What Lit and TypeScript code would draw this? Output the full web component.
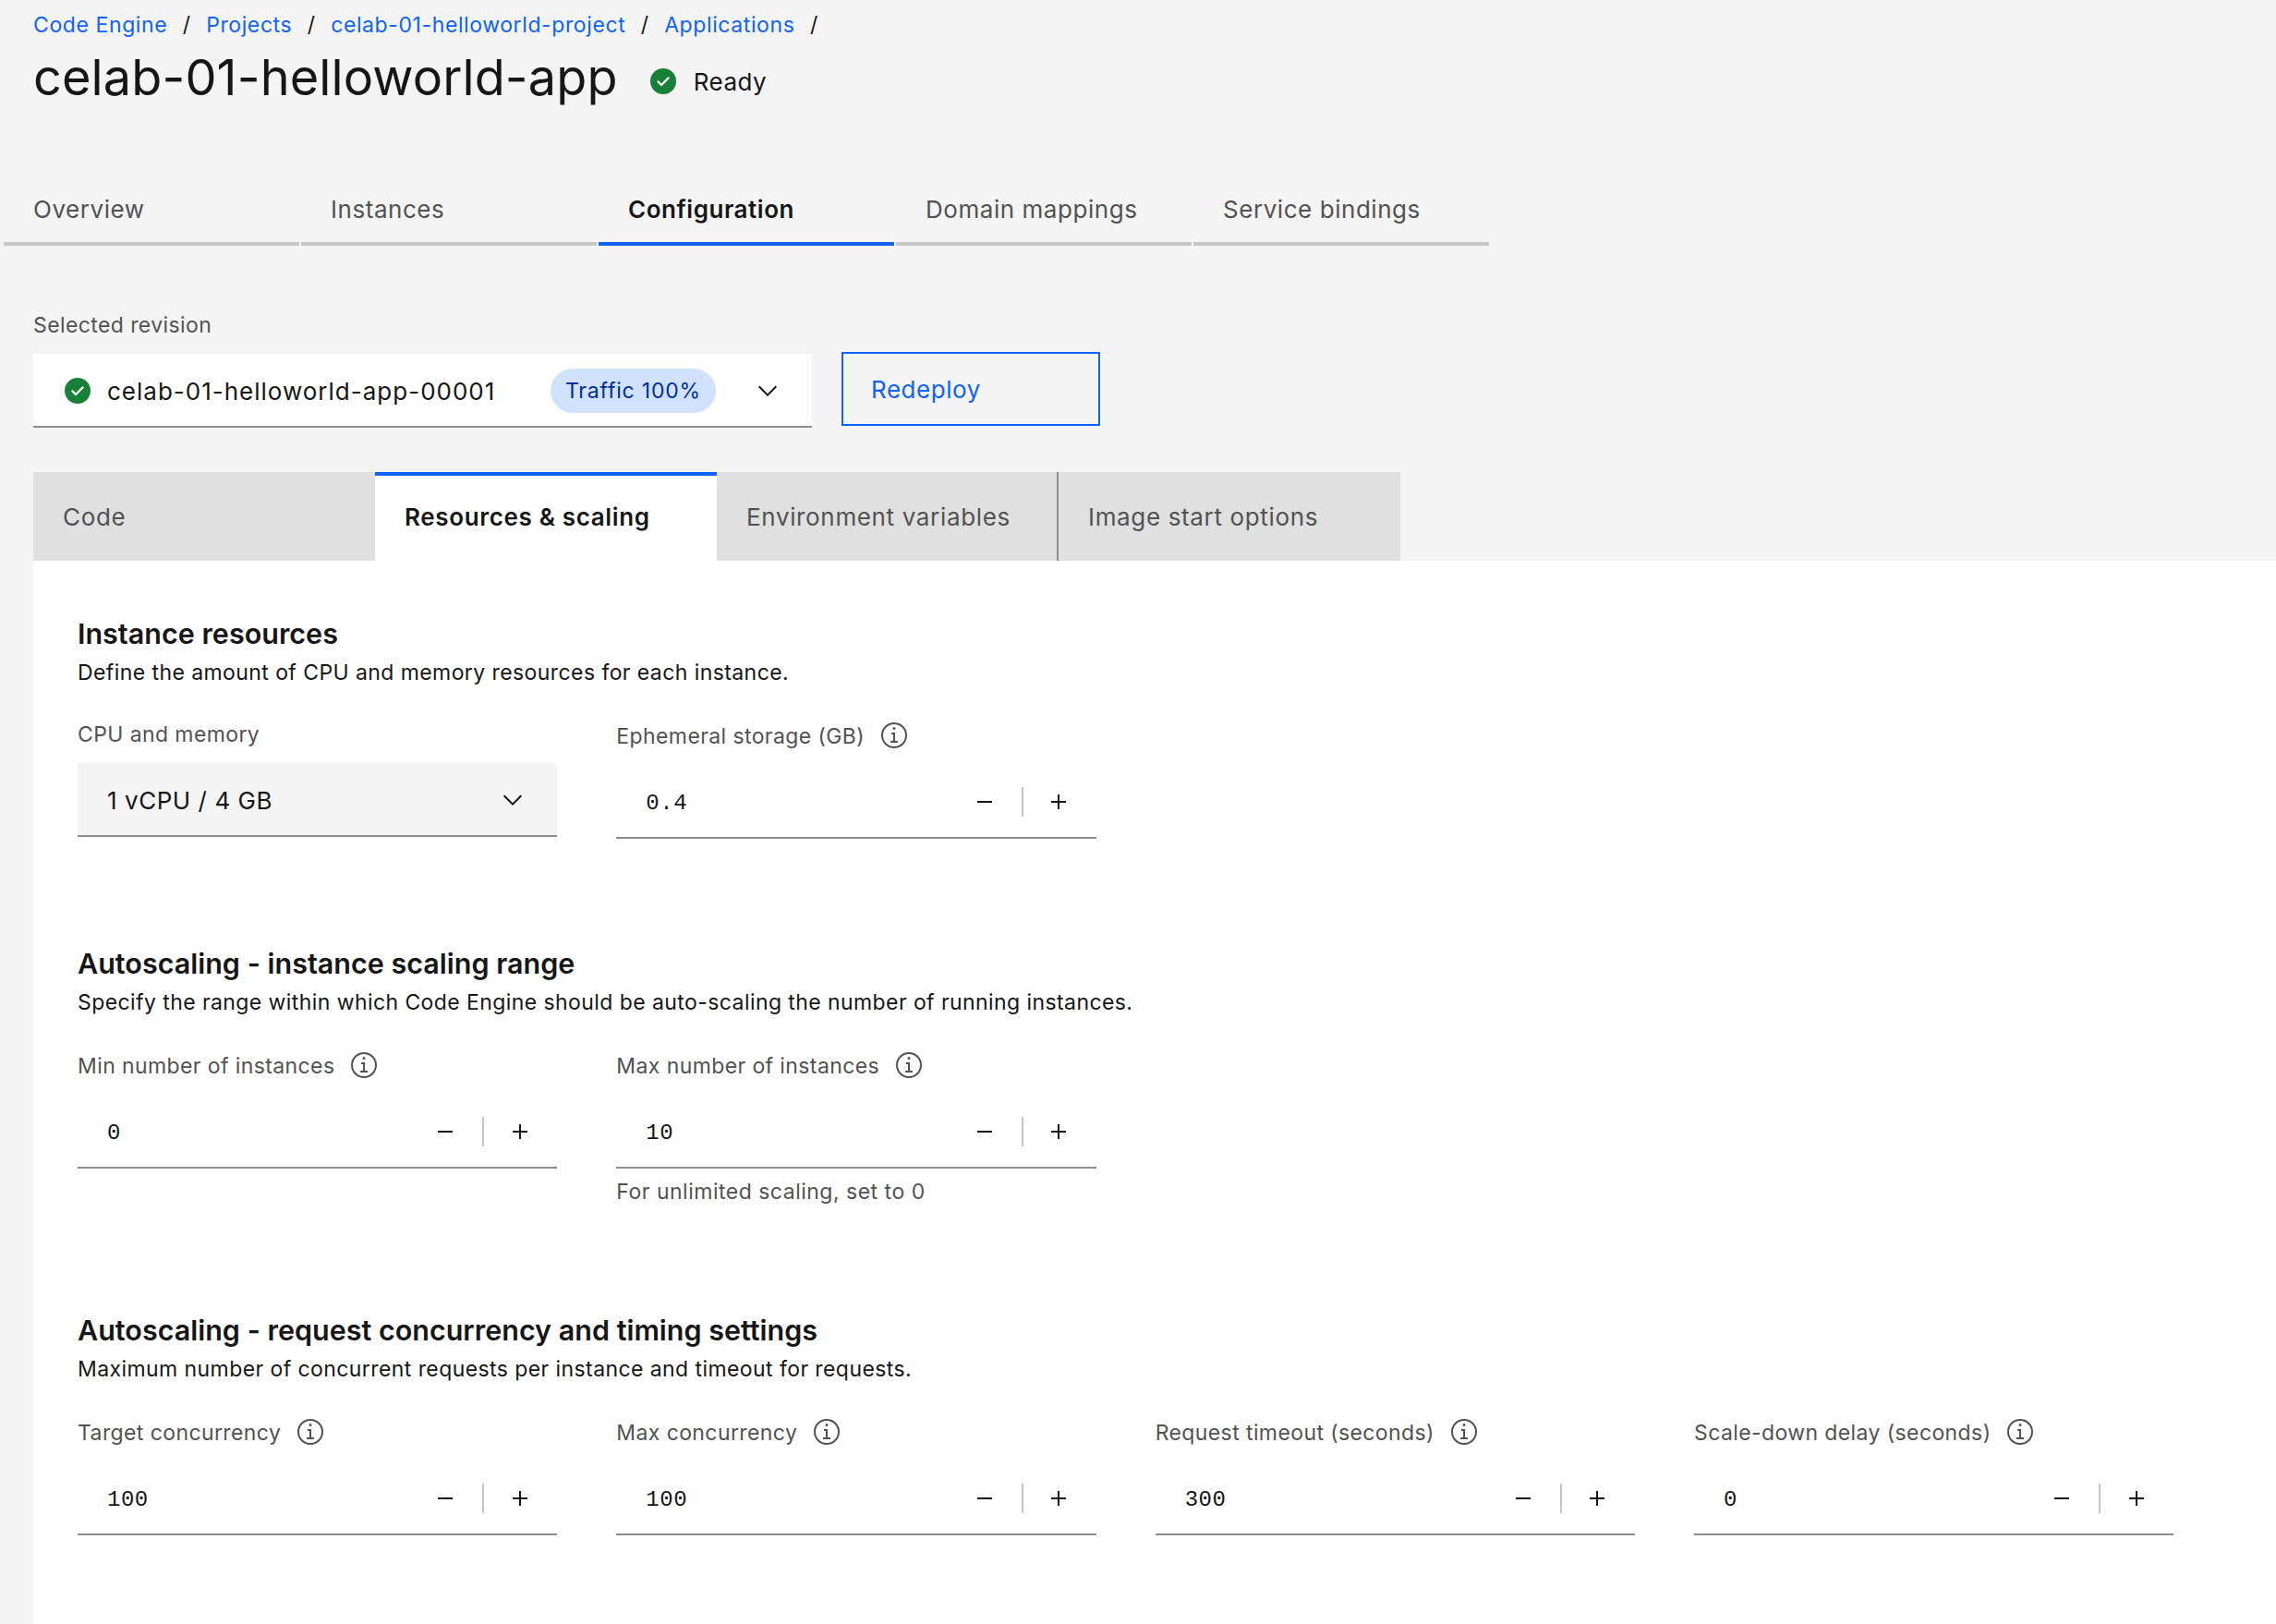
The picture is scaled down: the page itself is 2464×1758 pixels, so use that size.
import { LitElement, html, css, svg } from "lit";
import { customElement } from "lit/decorators.js";

const checkIcon = html`<svg class="status" viewBox="2 2 28 28">
  <circle cx="16" cy="16" r="14" fill="#198038"></circle>
  <path fill="#fff" d="M14 21.59l-5-5L10.59 15 14 18.41 21.41 11 23 12.59z"></path>
</svg>`;

const chevron = html`<svg class="chevron" viewBox="0 0 32 32">
  <path d="M16 22L6 12l1.4-1.4 8.6 8.6 8.6-8.6L26 12z"></path>
</svg>`;

const infoIcon = html`<svg class="info" viewBox="2 2 28 28">
  ${svg`<path d="M17 22v-9h-4v2h2v7h-3v2h8v-2h-3zM16 7a1.5 1.5 0 1 0 1.5 1.5A1.5 1.5 0 0 0 16 7z"></path>
  <path d="M16 30a14 14 0 1 1 14-14 14 14 0 0 1-14 14zm0-26a12 12 0 1 0 12 12A12 12 0 0 0 16 4z"></path>`}
</svg>`;

const minus = html`<svg viewBox="0 0 32 32"><path d="M8 15h16v2H8z"></path></svg>`;
const plus = html`<svg viewBox="0 0 32 32"><path d="M17 15V8h-2v7H8v2h7v7h2v-7h7v-2h-7z"></path></svg>`;

const crumbs = ["Code Engine", "Projects", "celab-01-helloworld-project", "Applications"];
const topTabs = ["Overview", "Instances", "Configuration", "Domain mappings", "Service bindings"];
const subTabs = ["Code", "Resources & scaling", "Environment variables", "Image start options"];

@customElement("app-root")
export class AppRoot extends LitElement {
  numberField(label: string, value: string, helper = "") {
    return html`
      <div class="field">
        <div class="label with-info"><span>${label}</span>${infoIcon}</div>
        <div class="control">
          <span class="value">${value}</span>
          <span class="step">${minus}</span>
          <span class="divider"></span>
          <span class="step step-plus">${plus}</span>
        </div>
        ${helper ? html`<div class="helper">${helper}</div>` : null}
      </div>
    `;
  }

  render() {
    return html`
      <nav class="breadcrumb">
        ${crumbs.map((c) => html`<a>${c}</a><span class="slash">/</span>`)}
      </nav>
      <header class="title-row">
        <h1>celab-01-helloworld-app</h1>
        ${checkIcon}
        <span class="ready">Ready</span>
      </header>

      <div class="top-tabs">
        ${topTabs.map(
          (t, i) => html`<div class="top-tab ${i === 2 ? "active" : ""}">${t}</div>`
        )}
      </div>

      <div class="label revision-label">Selected revision</div>
      <div class="revision-row">
        <div class="revision-select">
          ${checkIcon}
          <span class="revision-name">celab-01-helloworld-app-00001</span>
          <span class="tag">Traffic 100%</span>
          ${chevron}
        </div>
        <button class="redeploy">Redeploy</button>
      </div>

      <div class="sub-tabs">
        ${subTabs.map(
          (t, i) => html`<div class="sub-tab ${i === 1 ? "active" : ""} ${i === 2 ? "ruled" : ""}">${t}</div>`
        )}
      </div>

      <main class="panel">
        <section>
          <h2>Instance resources</h2>
          <p>Define the amount of CPU and memory resources for each instance.</p>
          <div class="fields">
            <div class="field">
              <div class="label">CPU and memory</div>
              <div class="cpu-select"><span>1 vCPU / 4 GB</span>${chevron}</div>
            </div>
            ${this.numberField("Ephemeral storage (GB)", "0.4")}
          </div>
        </section>
        <section>
          <h2>Autoscaling - instance scaling range</h2>
          <p>Specify the range within which Code Engine should be auto-scaling the number of running instances.</p>
          <div class="fields">
            ${this.numberField("Min number of instances", "0")}
            ${this.numberField("Max number of instances", "10", "For unlimited scaling, set to 0")}
          </div>
        </section>
        <section>
          <h2>Autoscaling - request concurrency and timing settings</h2>
          <p>Maximum number of concurrent requests per instance and timeout for requests.</p>
          <div class="fields">
            ${this.numberField("Target concurrency", "100")}
            ${this.numberField("Max concurrency", "100")}
            ${this.numberField("Request timeout (seconds)", "300")}
            ${this.numberField("Scale-down delay (seconds)", "0")}
          </div>
        </section>
      </main>
    `;
  }

  static styles = css`
    :host {
      display: block;
      height: 1758px;
      overflow: hidden;
      background: #f4f4f4;
      color: #161616;
      font-family: Inter, "Noto Sans", sans-serif;
    }

    svg {
      display: block;
      fill: currentColor;
      flex: none;
    }

    .breadcrumb {
      display: flex;
      align-items: center;
      height: 54px;
      padding-left: 36px;
      font-size: 23px;
      letter-spacing: 0.6px;
    }

    .breadcrumb a {
      color: #0f62fe;
    }

    .slash {
      margin: 0 16.5px;
    }

    .title-row {
      display: flex;
      align-items: center;
      height: 68px;
      padding-left: 36px;
    }

    h1 {
      margin: 0 35px 10px 0;
      font-size: 54px;
      font-weight: 400;
      letter-spacing: 0.13px;
    }

    .status {
      width: 28px;
      height: 28px;
    }

    .ready {
      margin-left: 19px;
      font-size: 26px;
      letter-spacing: 0.5px;
    }

    .top-tabs {
      display: flex;
      gap: 2px;
      margin: 68px 0 0 4px;
    }

    .top-tab {
      display: flex;
      align-items: center;
      box-sizing: border-box;
      width: 320px;
      height: 76px;
      padding-left: 32px;
      border-bottom: 4px solid #c6c6c6;
      color: #525252;
      font-size: 26px;
      letter-spacing: 0.55px;
    }

    .top-tab.active {
      border-color: #0f62fe;
      color: #161616;
      font-weight: 600;
    }

    .label {
      display: flex;
      align-items: center;
      height: 30px;
      color: #525252;
      font-size: 23px;
      letter-spacing: 0.4px;
    }

    .with-info {
      gap: 18px;
      height: 32px;
    }

    .with-info span {
      padding-top: 2px;
    }

    .info {
      width: 28px;
      height: 28px;
    }

    .revision-label {
      margin: 71px 0 0 36px;
      height: 30px;
    }

    .revision-row {
      display: flex;
      align-items: flex-start;
      gap: 32px;
      margin: 14px 0 0 36px;
    }

    .revision-select {
      display: flex;
      align-items: center;
      box-sizing: border-box;
      width: 843px;
      height: 80px;
      margin-top: 2px;
      padding: 2px 0 0 34px;
      background: #fff;
      border-bottom: 2px solid #8d8d8d;
    }

    .revision-name {
      width: 480px;
      margin-left: 18px;
      font-size: 26px;
      letter-spacing: 1px;
    }

    .tag {
      display: flex;
      align-items: center;
      justify-content: center;
      width: 179px;
      height: 48px;
      border-radius: 24px;
      background: #d0e2ff;
      color: #002d9c;
      font-size: 23px;
      letter-spacing: 0.8px;
    }

    .chevron {
      width: 32px;
      height: 32px;
      margin-left: 40px;
    }

    .redeploy {
      box-sizing: border-box;
      width: 280px;
      height: 80px;
      padding: 0 0 0 30px;
      background: none;
      border: 2px solid #0f62fe;
      color: #0f62fe;
      font: inherit;
      font-size: 26px;
      letter-spacing: 0.55px;
      text-align: left;
    }

    .sub-tabs {
      display: flex;
      margin: 48px 0 0 36px;
    }

    .sub-tab {
      display: flex;
      align-items: center;
      box-sizing: border-box;
      width: 370px;
      height: 96px;
      padding-left: 32px;
      background: #e0e0e0;
      color: #525252;
      font-size: 26px;
      letter-spacing: 0.65px;
    }

    .sub-tab.active {
      padding-bottom: 4px;
      background: #fff;
      border-top: 4px solid #0f62fe;
      color: #161616;
      font-weight: 600;
    }

    .sub-tab.ruled {
      border-right: 2px solid #8d8d8d;
    }

    .panel {
      margin-left: 36px;
      padding: 59px 0 0 48px;
      background: #fff;
      height: 1200px;
    }

    section + section {
      margin-top: 115px;
    }

    h2 {
      margin: 0;
      font-size: 30.5px;
      font-weight: 600;
      line-height: 40px;
    }

    p {
      margin: 7px 0 0;
      font-size: 23px;
      letter-spacing: 0.42px;
      line-height: 30px;
    }

    .fields {
      display: grid;
      grid-template-columns: repeat(4, 519.33px);
      gap: 64px;
      margin-top: 37px;
    }

    .cpu-select {
      display: flex;
      align-items: center;
      justify-content: space-between;
      box-sizing: border-box;
      height: 80px;
      margin-top: 16px;
      padding: 2px 32px 0;
      background: #f4f4f4;
      border-bottom: 2px solid #8d8d8d;
      font-size: 26px;
      letter-spacing: 0.55px;
    }

    .cpu-select .chevron {
      margin: 0;
    }

    .control {
      display: flex;
      align-items: center;
      box-sizing: border-box;
      height: 80px;
      margin-top: 16px;
      padding: 2px 0 0 32px;
      border-bottom: 2px solid #8d8d8d;
    }

    .value {
      flex: 1;
      padding-top: 2px;
      font-family: "Liberation Mono", monospace;
      font-size: 24px;
      letter-spacing: 0.5px;
    }

    .step {
      display: flex;
      align-items: center;
      justify-content: center;
      width: 80px;
      height: 32px;
    }

    .step svg {
      width: 32px;
      height: 32px;
    }

    .step-plus {
      width: 77px;
      margin-right: 2px;
    }

    .divider {
      width: 2px;
      height: 32px;
      background: #c6c6c6;
    }

    .helper {
      margin-top: 10px;
      color: #525252;
      font-size: 23px;
      letter-spacing: 0.5px;
      line-height: 30px;
    }
  `;
}
